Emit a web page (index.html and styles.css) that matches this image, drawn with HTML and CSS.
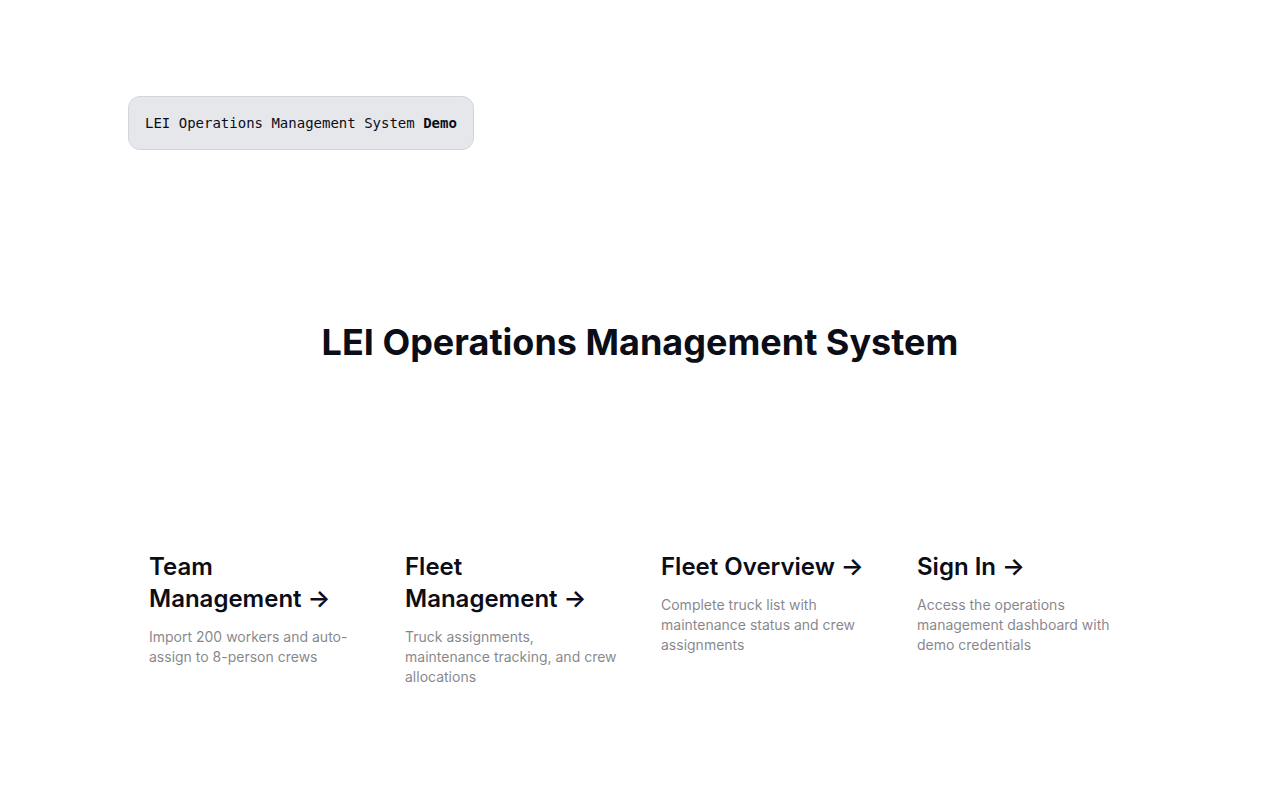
FILE: index.html
```html
<!DOCTYPE html>
<html lang="en">
  <head>
    <meta charset="UTF-8" />
    <title>LEI Operations Management System</title>
    <link rel="stylesheet" href="styles.css">
  </head>

  <body>
    <main class="main">
      <div class="topbar">
        <p class="badge">LEI Operations Management System <b>Demo</b></p>
      </div>

      <div class="hero">
        <h1>LEI Operations Management System</h1>
      </div>

      <div class="cards">
        <a href="#" class="card">
          <h2>Team Management <span>-&gt;</span></h2>
          <p>Import 200 workers and auto-assign to 8-person crews</p>
        </a>
        <a href="#" class="card">
          <h2>Fleet Management <span>-&gt;</span></h2>
          <p>Truck assignments, maintenance tracking, and crew allocations</p>
        </a>
        <a href="#" class="card">
          <h2>Fleet Overview <span>-&gt;</span></h2>
          <p>Complete truck list with maintenance status and crew assignments</p>
        </a>
        <a href="#" class="card">
          <h2>Sign In <span>-&gt;</span></h2>
          <p>Access the operations management dashboard with demo credentials</p>
        </a>
      </div>
    </main>
  </body>
</html>
```

FILE: styles.css
```css
* {
  box-sizing: border-box;
}

body {
  margin: 0;
  background-color: white;
  color: #0b0d17;
  font-family: Inter, "Noto Sans", sans-serif;
}

.main {
  display: flex;
  flex-direction: column;
  align-items: center;
  justify-content: space-between;
  min-height: 100vh;
  padding: 96px;
}

.topbar {
  width: 100%;
  max-width: 1024px;
  display: flex;
  font-family: "DejaVu Sans Mono", monospace;
  font-size: 14px;
  line-height: 20px;
}

.badge {
  margin: 0;
  padding: 16px;
  background-color: #e5e7eb;
  border: 1px solid #d1d5db;
  border-radius: 12px;
}

.hero h1 {
  margin: 0;
  font-size: 36px;
  line-height: 40px;
  font-weight: 700;
}

.cards {
  width: 100%;
  max-width: 1024px;
  display: grid;
  grid-template-columns: repeat(4, 1fr);
}

.card {
  padding: 16px 20px;
  border: 1px solid transparent;
  border-radius: 8px;
  color: inherit;
  text-decoration: none;
}

.card h2 {
  margin: 0 0 12px;
  font-size: 24px;
  line-height: 32px;
  font-weight: 600;
}

.card h2 span {
  display: inline-block;
}

.card p {
  margin: 0;
  max-width: 30ch;
  font-size: 14px;
  line-height: 20px;
  opacity: 0.5;
}
```
